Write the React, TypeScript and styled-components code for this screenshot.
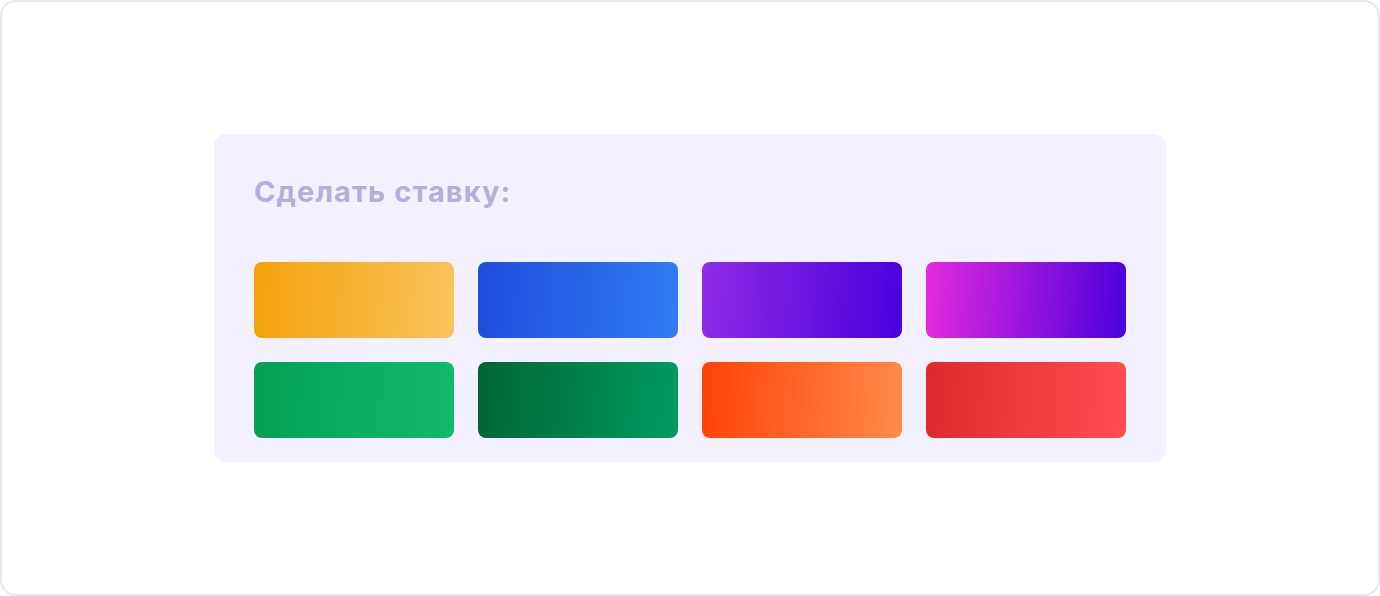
import React from "react";
import styled, { createGlobalStyle } from "styled-components";

const Global = createGlobalStyle`
  html, body { margin: 0; padding: 0; background: #ffffff; }
  body { font-family: "Inter", "Noto Sans", sans-serif; }
  * { box-sizing: border-box; }
`;

const Frame = styled.div`
  width: 1380px;
  height: 596px;
  border: 2px solid #e6e6f3;
  border-radius: 16px;
  background: #ffffff;
  display: flex;
  align-items: center;
  justify-content: center;
`;

const Card = styled.section`
  width: 952px;
  height: 328px;
  background: #f3f1fe;
  border-radius: 12px;
  padding: 40px 40px 24px;
  display: flex;
  flex-direction: column;
`;

const Title = styled.h2`
  margin: 0;
  flex: 0 0 88px;
  padding-top: 1px;
  font-family: "Inter", "Noto Sans", sans-serif;
  font-weight: 700;
  font-size: 29px;
  line-height: 34px;
  letter-spacing: 1.1px;
  color: #b4aed8;
`;

const Grid = styled.div`
  display: grid;
  grid-template-columns: repeat(4, 200px);
  grid-auto-rows: 76px;
  column-gap: 24px;
  row-gap: 24px;
`;

const Tile = styled.button<{ $from: string; $to: string }>`
  border: none;
  padding: 0;
  border-radius: 8px;
  cursor: pointer;
  background: linear-gradient(95deg, ${(p) => p.$from} 0%, ${(p) => p.$to} 100%);
`;

const tiles = [
  ["#f4a209", "#fac35c"],
  ["#1e4edc", "#307cf2"],
  ["#8e2ce5", "#4a00dc"],
  ["#e42ade", "#4a00dc"],
  ["#04a052", "#13ba6b"],
  ["#006535", "#009b62"],
  ["#fe4205", "#ff8c4c"],
  ["#de2a2b", "#ff4d52"],
];

export default function App() {
  return (
    <>
      <Global />
      <Frame>
        <Card>
          <Title>Сделать ставку:</Title>
          <Grid>
            {tiles.map(([a, b], i) => (
              <Tile key={i} $from={a} $to={b} aria-label={`bet ${i + 1}`} />
            ))}
          </Grid>
        </Card>
      </Frame>
    </>
  );
}
